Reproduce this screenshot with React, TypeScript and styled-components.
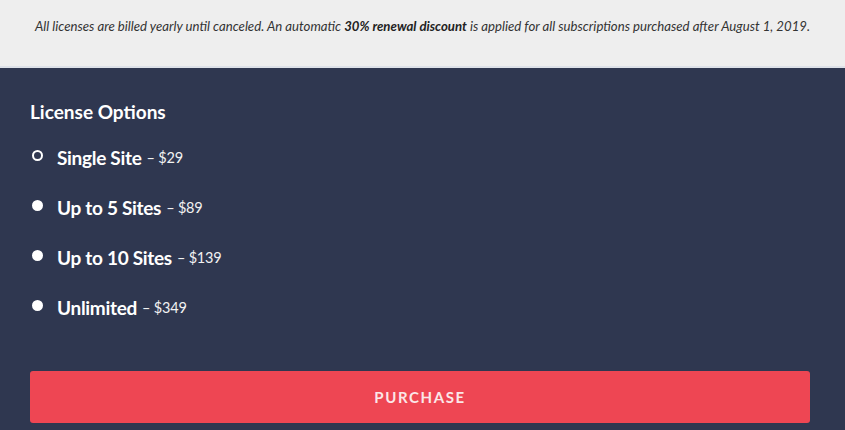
import React from "react";
import styled, { createGlobalStyle } from "styled-components";

const Global = createGlobalStyle`
  html, body { margin: 0; padding: 0; }
  body { font-family: Lato, "Open Sans", sans-serif; background: #2f3750; }
`;

const Notice = styled.div`
  height: 68px;
  background: #eeeeee;
  border-bottom: 2px solid #dde1e8;
  display: flex;
  align-items: flex-start;
  justify-content: center;
  padding-top: 18px;
  box-sizing: border-box;
  font-size: 13.2px;
  font-style: italic;
  color: #333333;
  b { font-weight: 700; color: #222; }
`;

const Panel = styled.section`
  background: #2f3750;
  padding: 32px 35px 0 30px;
  height: 362px;
  box-sizing: border-box;
  color: #ffffff;
`;

const Title = styled.h2`
  margin: 0 0 21px 0;
  font-size: 19px;
  font-weight: 700;
  line-height: 24px;
`;

const Options = styled.ul`
  list-style: none;
  margin: 0;
  padding: 0;
  display: flex;
  flex-direction: column;
  gap: 26px;
`;

const Option = styled.li`
  display: flex;
  align-items: center;
  height: 24px;
`;

const Radio = styled.span<{ $checked?: boolean }>`
  width: 11px;
  height: 11px;
  border-radius: 50%;
  box-sizing: border-box;
  margin: -4px 14px 0 2px;
  background: ${(p) => (p.$checked ? "#2f3750" : "#ffffff")};
  border: 2px solid #ffffff;
`;

const Label = styled.span`
  font-size: 19px;
  font-weight: 700;
  letter-spacing: -0.3px;
`;

const Price = styled.span`
  font-size: 14.5px;
  margin-left: 5px;
  color: #f2f2f2;
  letter-spacing: -0.2px;
`;

const Button = styled.button`
  margin-top: 52px;
  width: 780px;
  height: 52px;
  border: none;
  border-radius: 3px;
  background: #ee4653;
  color: #fbe7e8;
  font-family: Lato, sans-serif;
  font-size: 15px;
  font-weight: 700;
  letter-spacing: 1.6px;
  cursor: pointer;
`;

const options = [
  { label: "Single Site", price: "$29", checked: true },
  { label: "Up to 5 Sites", price: "$89" },
  { label: "Up to 10 Sites", price: "$139" },
  { label: "Unlimited", price: "$349" },
];

export default function App() {
  return (
    <>
      <Global />
      <Notice>
        <span>
          All licenses are billed yearly until canceled. An automatic <b>30% renewal discount</b> is applied for all
          subscriptions purchased after August 1, 2019.
        </span>
      </Notice>
      <Panel>
        <Title>License Options</Title>
        <Options>
          {options.map((o) => (
            <Option key={o.label}>
              <Radio $checked={o.checked} />
              <Label>{o.label}</Label>
              <Price>– {o.price}</Price>
            </Option>
          ))}
        </Options>
        <Button>PURCHASE</Button>
      </Panel>
    </>
  );
}
